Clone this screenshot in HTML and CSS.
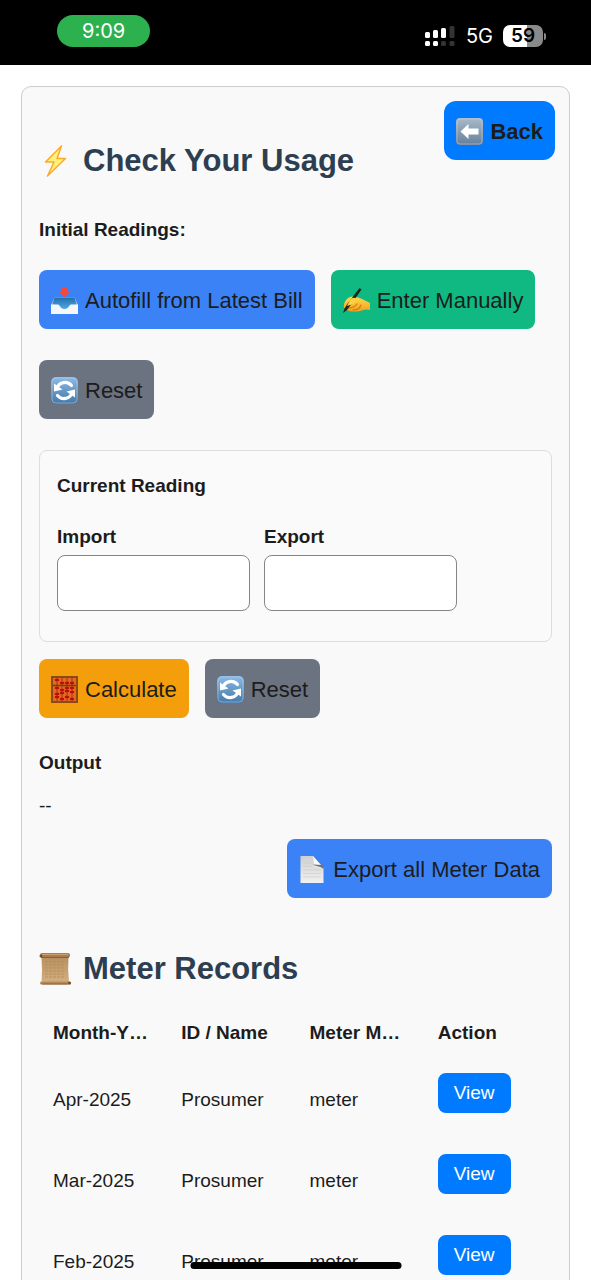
FILE: index.html
```html
<!DOCTYPE html>
<html lang="en">
<head>
<meta charset="utf-8">
<meta name="viewport" content="width=device-width, initial-scale=1">
<title>Check Your Usage</title>
<link rel="stylesheet" href="styles.css">
</head>
<body>
<svg class="defs" aria-hidden="true">
  <defs>
    <linearGradient id="grey-tile" x1="0" y1="0" x2="0" y2="1"><stop offset="0" stop-color="#a9b9ca"/><stop offset="1" stop-color="#65809b"/></linearGradient>
    <linearGradient id="blue-tile" x1="0" y1="0" x2="0" y2="1"><stop offset="0" stop-color="#8dbbe6"/><stop offset="1" stop-color="#4378a9"/></linearGradient>
    <linearGradient id="tray-blue" x1="0" y1="0" x2="0" y2="1"><stop offset="0" stop-color="#1f6fa8"/><stop offset="1" stop-color="#52a8e8"/></linearGradient>
    <linearGradient id="skin" x1="0" y1="0" x2="0" y2="1"><stop offset="0" stop-color="#ffdc4a"/><stop offset="1" stop-color="#f0a020"/></linearGradient>
    <linearGradient id="paper" x1="0" y1="0" x2="0" y2="1"><stop offset="0" stop-color="#cfcfcf"/><stop offset="1" stop-color="#f1f1f1"/></linearGradient>
    <linearGradient id="parchment" x1="0" y1="0" x2="0" y2="1"><stop offset="0" stop-color="#b98f60"/><stop offset="1" stop-color="#d3ae7e"/></linearGradient>
    <symbol id="cycle" viewBox="0 0 27 27">
      <rect x="0" y="0" width="27" height="27" rx="5" fill="url(#blue-tile)"/>
      <rect x="1" y="1" width="25" height="25" rx="4" fill="none" stroke="#b5d3ef" stroke-opacity=".5"/>
      <path d="M6 11A8.500 8.500 0 0 1 20.500 8.500M21 16A8.500 8.500 0 0 1 6.500 18.500" fill="none" stroke="#fff" stroke-width="3.200" stroke-linecap="round"/>
      <path d="M3 6.500V14.500L11.500 12.500ZM24 20.500V12.500L15.500 14.500Z" fill="#fff"/>
    </symbol>
  </defs>
</svg>
<div class="screen">
  <header class="status">
    <span class="clock">9:09</span>
    <div class="status-right">
      <svg class="signal" width="30" height="22" viewBox="0 0 30 22" aria-hidden="true">
        <g fill="#fff"><rect x="0" y="7" width="5" height="6" rx="1.500"/><rect x="8" y="5" width="5" height="8" rx="1.500"/><rect x="16" y="3" width="5" height="10" rx="1.500"/><rect x="0" y="16" width="5" height="5" rx="1.500"/><rect x="8" y="16" width="5" height="5" rx="1.500"/></g>
        <g fill="#333"><rect x="24.500" y="1" width="5" height="12" rx="1.500"/><rect x="16" y="16" width="5" height="5" rx="1.500"/><rect x="24.500" y="16" width="5" height="5" rx="1.500"/></g>
      </svg>
      <span class="network">5G</span>
      <span class="battery">59</span>
    </div>
  </header>

  <main class="card">
    <div class="card-head">
      <h1 class="title">
        <svg class="title-icon" width="32" height="32" viewBox="0 0 32 32" aria-hidden="true"><path d="M22.500 1 6.500 17H15L8.500 31 26.500 13.500H18Z" fill="#fff07a" stroke="#fbab2c" stroke-width="1.500" stroke-linejoin="round"/></svg>
        Check Your Usage
      </h1>
      <button class="btn btn-back" type="button">
        <svg class="icon" width="27" height="27" viewBox="0 0 27 27" aria-hidden="true"><rect width="27" height="27" rx="4" fill="url(#grey-tile)"/><rect x="1" y="1" width="25" height="25" rx="3" fill="none" stroke="#ccd6e0" stroke-opacity=".5"/><path d="M4.500 13.500 12.500 6V10.500H22.500V16.500H12.500V21Z" fill="#fff"/></svg>
        Back
      </button>
    </div>

    <section class="block">
      <h2 class="label">Initial Readings:</h2>
      <div class="actions initial">
        <button class="btn btn-blue" type="button">
          <svg class="icon" width="27" height="27" viewBox="0 0 27 27" aria-hidden="true"><path d="M3.500 10.500H23.500L27 18.500H0Z" fill="#d8e4ee"/><path d="M3.500 10.500H23.500L26 18C20 17 19 22 13.500 22S7 17 1 18Z" fill="url(#tray-blue)"/><path d="M0 17.500H7C9 17.500 9 22 13.500 22S18 17.500 20 17.500H27V27H0Z" fill="#f5f6f7"/><path d="M10.500 0H16.500V4.500H19L13.500 10 8 4.500H10.500Z" fill="#f5483c"/></svg>
          Autofill from Latest Bill
        </button>
        <button class="btn btn-green" type="button">
          <svg class="icon" width="27" height="27" viewBox="0 0 27 27" aria-hidden="true"><path d="M1 21C0 16 4 10 9 9.500L15 10.500 19 12 27 16V23C22 21 18 25 12 24.500 8 24.500 4 24 1 21Z" fill="url(#skin)"/><path d="M5 17 11 13M5 21C8 21 12 20 14 17M10 23C14 23 17 21 18 18" fill="none" stroke="#ce7c14" stroke-width="1.200" stroke-linecap="round"/><path d="M16.500 1 18.500 2.500 7 19 4 23 0 26 1.500 21.500 4 17.500Z" fill="#20251f"/><path d="M7 13C9 10 13 10 14 13L10 17 4 19Z" fill="#ffd044"/></svg>
          Enter Manually
        </button>
        <button class="btn btn-grey" type="button">
          <svg class="icon" width="27" height="27" aria-hidden="true"><use href="#cycle"/></svg>
          Reset
        </button>
      </div>

      <section class="reading">
        <h2 class="label">Current Reading</h2>
        <div class="fields">
          <div class="field"><label class="label" for="import">Import</label><input class="input" id="import" type="text"></div>
          <div class="field"><label class="label" for="export">Export</label><input class="input" id="export" type="text"></div>
        </div>
      </section>

      <div class="actions">
        <button class="btn btn-amber" type="button">
          <svg class="icon" width="27" height="27" viewBox="0 0 27 27" aria-hidden="true"><rect x="1" y="1" width="25" height="25" fill="#e8671c" stroke="#8a4a1c" stroke-width="2"/><path d="M2 9.500H25" stroke="#7d3c14" stroke-width="1.500"/><path d="M6 2V25M11 2V25M16 2V25M21 2V25" stroke="#7b3513" stroke-width=".8"/><g fill="#b80f0c"><ellipse cx="6" cy="4" rx="2.300" ry="1.300"/><ellipse cx="11" cy="7" rx="2.300" ry="1.300"/><ellipse cx="16" cy="7" rx="2.300" ry="1.300"/><ellipse cx="21" cy="7" rx="2.300" ry="1.300"/><ellipse cx="6" cy="12" rx="2.300" ry="1.300"/><ellipse cx="6" cy="18" rx="2.300" ry="1.300"/><ellipse cx="6" cy="21" rx="2.300" ry="1.300"/><ellipse cx="11" cy="14" rx="2.300" ry="1.300"/><ellipse cx="11" cy="17" rx="2.300" ry="1.300"/><ellipse cx="11" cy="23" rx="2.300" ry="1.300"/><ellipse cx="16" cy="12" rx="2.300" ry="1.300"/><ellipse cx="16" cy="15" rx="2.300" ry="1.300"/><ellipse cx="16" cy="21" rx="2.300" ry="1.300"/><ellipse cx="21" cy="12" rx="2.300" ry="1.300"/><ellipse cx="21" cy="16" rx="2.300" ry="1.300"/><ellipse cx="21" cy="23" rx="2.300" ry="1.300"/></g></svg>
          Calculate
        </button>
        <button class="btn btn-grey" type="button">
          <svg class="icon" width="27" height="27" aria-hidden="true"><use href="#cycle"/></svg>
          Reset
        </button>
      </div>

      <h2 class="label output-label">Output</h2>
      <p class="output">--</p>
      <div class="actions end">
        <button class="btn btn-blue" type="button">
          <svg class="icon" width="27" height="27" viewBox="0 0 27 27" aria-hidden="true"><path d="M1.500 0H14L24.500 12V27H1.500Z" fill="url(#paper)"/><path d="M14 0 24.500 12 15.500 10.500Z" fill="#fafafa"/><path d="M14 8.500C17 11 21 9.500 24.500 13V10L23 9Z" fill="#737373"/><path d="M4 7H12M4 10.500H13M4 14H22M4 17.500H22M4 21H22" stroke="#c9c9c9" stroke-width=".6"/></svg>
          Export all Meter Data
        </button>
      </div>

      <h2 class="title records">
        <svg class="title-icon" width="32" height="32" viewBox="0 0 32 32" aria-hidden="true"><path d="M2.500 4H29.500Q28.500 17 30 29H2.500Q3.500 17 2.500 4Z" fill="url(#parchment)"/><path d="M6 9H26M6 12H26M6 15H26M6 18H26M6 21H26M6 24H26" stroke="#b08a5a" stroke-width=".7" stroke-dasharray="3 1"/><rect x="1" y="0" width="30" height="4.500" rx="2" fill="#a97c4d"/><path d="M3 1.500H29" stroke="#cda273"/><path d="M2 4.500H30" stroke="#7d5831" stroke-width=".8"/><rect x="1" y="28.500" width="31" height="3" rx="1.500" fill="#b78a5b"/><path d="M3 31H29" stroke="#735033" stroke-width=".8"/><circle cx="2" cy="3" r="1.500" fill="#715033"/><circle cx="30.500" cy="30" r="1.500" fill="#715033"/></svg>
        Meter Records
      </h2>
      <table class="table">
        <thead><tr><th>Month-Y…</th><th>ID / Name</th><th>Meter M…</th><th>Action</th></tr></thead>
        <tbody>
          <tr><td>Apr-2025</td><td>Prosumer</td><td>meter</td><td><button class="view" type="button">View</button></td></tr>
          <tr><td>Mar-2025</td><td>Prosumer</td><td>meter</td><td><button class="view" type="button">View</button></td></tr>
          <tr><td>Feb-2025</td><td>Prosumer</td><td>meter</td><td><button class="view" type="button">View</button></td></tr>
        </tbody>
      </table>
    </section>
  </main>
  <div class="home-bar"></div>
</div>
</body>
</html>
```
FILE: styles.css
```css
* { box-sizing: border-box; }
body { margin: 0; background: #fff; color: #1c1c1c; font: 19px/24px "Liberation Sans", Arial, sans-serif; }
h1, h2, p { margin: 0; }
.defs { position: absolute; width: 0; height: 0; }
.screen { height: 100vh; overflow: hidden; }

.status { display: flex; justify-content: space-between; align-items: flex-start; height: 65px; padding: 15px 48px 0 57px; background: #000; color: #fff; font-family: Inter, sans-serif; }
.clock { padding: 4px 25px; border-radius: 16px; background: #2db14e; font-size: 20px; }
.status-right { display: flex; align-items: center; padding-top: 9px; }
.network { margin: 0 10px 0 11px; font-size: 20px; }
.battery { position: relative; width: 40px; border-radius: 7px; background: linear-gradient(90deg, #fff 59%, #8a8a8a 59%); color: #000; font-size: 19px; font-weight: 600; line-height: 22px; text-align: center; }
.battery::after { content: ""; position: absolute; right: -3px; top: 8px; width: 2px; height: 7px; border-radius: 0 2px 2px 0; background: #8a8a8a; }

.card { margin: 21px 21px 0; padding: 14px; border: 1px solid #ccc; border-radius: 10px; background: #f9f9f9; }
.card-head { display: flex; justify-content: space-between; align-items: flex-start; padding-left: 3px; }
.card-head .title { padding-top: 42px; }
.title { display: flex; align-items: center; gap: 12px; color: #2c3e50; font-size: 31px; line-height: 36px; font-weight: 700; }
.title-icon, .icon { flex: none; }
.label { font-size: 19px; line-height: 24px; font-weight: 700; }
.block { padding: 39px 3px 0; }

.actions { display: flex; flex-wrap: wrap; gap: 31px 16px; }
.initial { margin: 28px 0 31px; }
.end { justify-content: flex-end; margin-top: 21px; }
.btn { display: flex; align-items: center; gap: 7px; height: 59px; padding: 2px 12px 0; border: 0; border-radius: 8px; color: #1c1c1c; font: 22px/26px "Liberation Sans", Arial, sans-serif; white-space: nowrap; }
.btn-back { border-radius: 12px; background: #007bff; font-weight: 700; }
.btn-blue { background: #3b82f6; }
.btn-green { background: #10b981; }
.btn-grey { background: #6b7280; }
.btn-amber { background: #f59e0b; }

.reading { margin-bottom: 17px; padding: 23px 17px 30px; border: 1px solid #ddd; border-radius: 8px; background: #fafafa; }
.fields { display: flex; gap: 14px; margin-top: 27px; }
.field { display: flex; flex-direction: column; gap: 6px; width: 193px; }
.input { width: 100%; height: 56px; padding: 0 12px; border: 1px solid #858585; border-radius: 8px; background: #fff; font: inherit; }
.output-label { margin-top: 33px; }
.output { margin-top: 19px; }
.records { margin-top: 53px; }

.table { width: 100%; margin-top: 20px; border-collapse: collapse; table-layout: fixed; }
th, td { padding: 14px 14px 13px; text-align: left; vertical-align: middle; white-space: nowrap; }
th { padding-bottom: 14px; }
.view { display: block; height: 40px; margin-bottom: 14px; padding: 0 16px; border: 0; border-radius: 8px; background: #007bff; color: #fff; font: inherit; }
.home-bar { position: fixed; bottom: 11px; left: 50%; width: 211px; height: 7px; border-radius: 4px; background: #000; transform: translateX(-50%); }
```
